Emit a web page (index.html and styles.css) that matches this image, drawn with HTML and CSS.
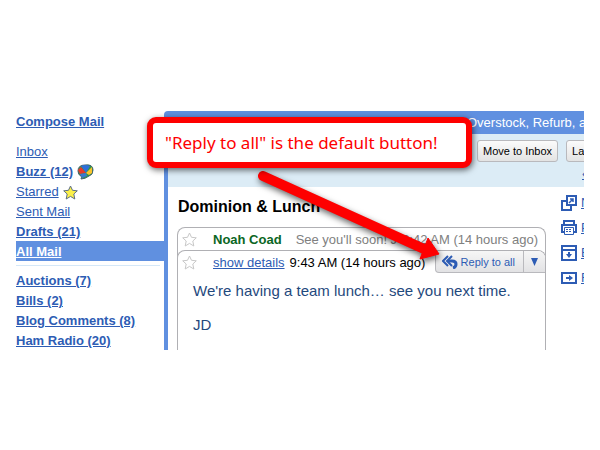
FILE: index.html
```html
<!DOCTYPE html>
<html lang="en">
<head>
<meta charset="UTF-8">
<meta name="viewport" content="width=device-width, initial-scale=1.0">
<title>Dominion &amp; Lunch</title>
<link rel="stylesheet" href="styles.css">
</head>
<body>

<div class="mail">
  <nav class="sidebar">
    <a class="compose bold" href="#">Compose Mail</a>
    <ul class="folders">
      <li><a href="#">Inbox</a></li>
      <li>
        <a class="bold" href="#">Buzz (12)</a>
        <svg class="buzz" width="17" height="16" viewBox="0 0 17 16">
          <path d="M1 7 Q1 1 8 1 Q16 0 16 6 Q16 11 12 12 Q8 15 4 15 Q5 13 4 12 Q1 11 1 7z" fill="#2f9a48" stroke="#46606e"/>
          <path d="M4 2 Q8 0 13 2 L9 9z" fill="#2f6fd8"/>
          <path d="M1 6 L4 3 L9 9 L3 10z" fill="#e8382a"/>
          <path d="M9 9 L15 3 L15 9 L12 11z" fill="#fbc52d"/>
          <path d="M3 10 L9 9 L10 12 L5 14z" fill="#3a78d0"/>
        </svg>
      </li>
      <li>
        <a href="#">Starred</a>
        <svg class="star" width="15" height="15" viewBox="0 0 15 15">
          <path d="M7.5 1 L9.5 5.3 L14.3 5.8 L10.8 9 L11.8 14 L7.5 11.4 L3.2 14 L4.2 9 L0.7 5.8 L5.5 5.3z" fill="#fbf04a" stroke="#5d6f86"/>
        </svg>
      </li>
      <li><a href="#">Sent Mail</a></li>
      <li><a class="bold" href="#">Drafts (21)</a></li>
      <li class="current"><a class="bold" href="#">All Mail</a></li>
    </ul>
    <ul class="labels">
      <li><a class="bold" href="#">Auctions (7)</a></li>
      <li><a class="bold" href="#">Bills (2)</a></li>
      <li><a class="bold" href="#">Blog Comments (8)</a></li>
      <li><a class="bold" href="#">Ham Radio (20)</a></li>
    </ul>
  </nav>

  <main class="main">
    <div class="topbar">Overstock, Refurb, and</div>
    <div class="toolbar">
      <div class="buttons">
        <button class="btn">Move to Inbox</button>
        <button class="btn">Labels</button>
      </div>
      <a class="newer" href="#">‹ Newer</a>
    </div>
    <div class="content">
      <div class="thread">
        <h1>Dominion &amp; Lunch</h1>
        <div class="message collapsed">
          <svg class="outline-star" width="15" height="15" viewBox="0 0 15 15">
            <path d="M7.5 1 L9.5 5.3 L14.3 5.8 L10.8 9 L11.8 14 L7.5 11.4 L3.2 14 L4.2 9 L0.7 5.8 L5.5 5.3z"/>
          </svg>
          <span class="sender">Noah Coad</span>
          <span class="snippet">See you'll soon! J</span>
          <span class="date">9:42 AM (14 hours ago)</span>
        </div>
        <div class="message open">
          <div class="message-head">
            <svg class="outline-star" width="15" height="15" viewBox="0 0 15 15">
              <path d="M7.5 1 L9.5 5.3 L14.3 5.8 L10.8 9 L11.8 14 L7.5 11.4 L3.2 14 L4.2 9 L0.7 5.8 L5.5 5.3z"/>
            </svg>
            <a class="details" href="#">show details</a>
            <span class="time">9:43 AM (14 hours ago)</span>
            <div class="reply">
              <button class="reply-all">
                <svg width="16" height="14" viewBox="0 0 16 14" fill="none" stroke="#2d5cb4" stroke-width="2">
                  <path d="M6 1 L1 6 L6 11"/>
                  <path d="M10 1 L5 6 L10 11"/>
                  <path d="M6 6 H10 Q14 6 14 9 Q14 12 11 13" stroke-width="3"/>
                </svg>
                Reply to all
              </button>
              <button class="reply-more" aria-label="More">
                <svg width="7" height="8" viewBox="0 0 7 8"><path d="M0 0 H7 L3.5 8z" fill="#2d5cb4"/></svg>
              </button>
            </div>
          </div>
          <p>We're having a team lunch… see you next time.</p>
          <p>JD</p>
        </div>
      </div>
      <div class="actions">
        <a href="#">
          <svg width="16" height="16" viewBox="0 0 16 16" fill="none" stroke="#2d5cb4" stroke-width="2">
            <path d="M6 1 H15 V10 H6z M5 6 H1 V15 H10 V11"/>
            <path d="M8 8 L12 4 M9 4 H12 V7" stroke-width="1.5"/>
          </svg>
          New window
        </a>
        <a href="#">
          <svg width="16" height="16" viewBox="0 0 16 16" fill="none" stroke="#2d5cb4">
            <path d="M3 5 V1 H13 V5 M3 12 H1 V5 H15 V12 H13" stroke-width="2"/>
            <path d="M3.5 7.5 H12.5 V14.5 H3.5z"/>
            <path d="M5 9.5 H11 M5 11.5 H11" stroke-dasharray="2 1"/>
          </svg>
          Print all
        </a>
        <a href="#">
          <svg width="16" height="16" viewBox="0 0 16 16" fill="none" stroke="#2d5cb4" stroke-width="2">
            <path d="M1 1 H15 V15 H1z M1 5 H15"/>
            <path d="M8 7 V10"/>
            <path d="M5 9 H11 L8 13z" fill="#2d5cb4" stroke="none"/>
          </svg>
          Expand all
        </a>
        <a href="#">
          <svg width="16" height="16" viewBox="0 0 16 16" fill="none" stroke="#2d5cb4" stroke-width="2">
            <path d="M1 3 H15 V13 H1z M5 8 H9"/>
            <path d="M8 5 L12 8 L8 11z" fill="#2d5cb4" stroke="none"/>
          </svg>
          Forward all
        </a>
      </div>
    </div>
  </main>

  <svg class="arrow" width="200" height="110" viewBox="0 0 200 110">
    <path d="M23 25 L184 98" stroke="#fe0000" stroke-width="10" stroke-linecap="round"/>
    <path d="M188 87 L199 103 L180 108z" fill="#fe0000" stroke="#fe0000" stroke-width="1" stroke-linejoin="round"/>
  </svg>
  <div class="callout">"Reply to all" is the default button!</div>
</div>

</body>
</html>
```

FILE: styles.css
```css
body {
  margin: 0;
  padding: 111px 16px 0;
  background-color: #fff;
  font-family: "Liberation Sans", Arial, sans-serif;
  font-size: 13px;
}
a {
  color: #2d5cb4;
}
ul {
  list-style: none;
  margin: 0;
  padding: 0;
}
button {
  font-family: inherit;
  box-sizing: border-box;
  margin: 0;
}
.bold {
  font-weight: bold;
}
.mail {
  position: relative;
  display: flex;
  overflow: hidden;
}

/* sidebar */
.sidebar {
  flex: 0 0 148px;
  line-height: 18px;
}
.compose {
  display: block;
  padding-top: 2px;
}
.folders {
  margin-top: 10px;
}
.sidebar li {
  display: flex;
  align-items: center;
  gap: 4px;
  box-sizing: border-box;
  height: 20px;
  padding-top: 2px;
}
.sidebar .current {
  background-color: #6090e0;
}
.current a {
  color: #fff;
}
.labels {
  margin: 4px 4px 0 0;
  padding-top: 4px;
  border-top: 1px solid #d5e8f8;
}

/* conversation */
.main {
  flex: 1;
  min-width: 0;
  display: flex;
  flex-direction: column;
  border-left: 4px solid #6090e0;
  border-top-left-radius: 4px;
}
.topbar {
  padding-left: 299px;
  background-color: #6090e0;
  color: #fff;
  line-height: 23px;
  white-space: nowrap;
  overflow: hidden;
}
.toolbar {
  height: 47px;
  padding: 6px 0 0 309px;
  background-color: #dcecf6;
  overflow: hidden;
}
.buttons {
  display: flex;
  gap: 8px;
}
.btn {
  flex: none;
  height: 22px;
  padding: 0 5px;
  border: 1px solid #b9b9bd;
  border-radius: 3px;
  background: linear-gradient(#fbfbfb, #e3e3e3);
  font-size: 11px;
  color: #000;
}
.newer {
  display: block;
  margin-left: 105px;
  line-height: 24px;
  white-space: nowrap;
}
.content {
  flex: 1;
  display: flex;
  gap: 15px;
  padding-left: 9px;
}
.thread {
  flex: 1;
  min-width: 0;
  display: flex;
  flex-direction: column;
}
h1 {
  margin: 10px 1px;
  font-size: 16px;
  line-height: 20px;
}
.message {
  border: 1px solid #b0b0b4;
  border-bottom: none;
  border-radius: 8px 8px 0 0;
}
.collapsed {
  display: flex;
  align-items: center;
  height: 32px;
  margin-bottom: -9px;
  padding: 0 7px 8px 4px;
  box-sizing: border-box;
  color: #808080;
  white-space: nowrap;
}
.outline-star {
  flex: none;
  margin-right: 16px;
  fill: #fff;
  stroke: #c8c8c8;
}
.sender {
  margin-right: 14px;
  font-weight: bold;
  color: #0b6623;
}
.date {
  margin-left: auto;
}
.open {
  flex: 1;
  background-color: #fff;
}
.message-head {
  display: flex;
  align-items: center;
  padding-left: 4px;
}
.time {
  margin-left: 5px;
  white-space: nowrap;
}
.details {
  white-space: nowrap;
}
.reply {
  display: flex;
  margin-left: auto;
}
.reply button {
  display: flex;
  align-items: center;
  gap: 3px;
  height: 22px;
  border: 1px solid #b9b9bd;
  border-top: none;
  background: linear-gradient(#f6f6f6, #e2e2e4);
  color: #2d5cb4;
  font-size: 11px;
  white-space: nowrap;
}
.reply .reply-all {
  padding: 0 8px 0 6px;
  border-bottom-left-radius: 4px;
}
.reply .reply-more {
  padding: 0 7px;
  border-left: none;
  border-right: none;
  border-top-right-radius: 7px;
}
.open p {
  margin: 9px 15px 0;
  font-size: 15px;
  line-height: 17px;
  color: #1f497d;
}
.open p + p {
  margin-top: 17px;
}
.actions {
  flex: 0 0 23px;
  overflow: hidden;
  padding-top: 7px;
}
.actions a {
  display: flex;
  align-items: center;
  gap: 4px;
  height: 17px;
  margin-bottom: 8px;
  white-space: nowrap;
}
.actions svg {
  flex: none;
}

/* annotation over the mail */
.callout {
  position: absolute;
  left: 131px;
  top: 6px;
  box-sizing: border-box;
  width: 325px;
  padding: 0 12px;
  border: 6px solid #fe0000;
  border-radius: 9px;
  background-color: #fff;
  box-shadow: 1px 2px 6px rgba(0, 0, 0, 0.6);
  color: #fe0000;
  font-family: "Noto Sans", "Segoe UI", sans-serif;
  font-size: 17px;
  line-height: 39px;
  white-space: nowrap;
}
.arrow {
  position: absolute;
  left: 224px;
  top: 40px;
  filter: drop-shadow(1px 3px 3px rgba(0, 0, 0, 0.6));
}
```
